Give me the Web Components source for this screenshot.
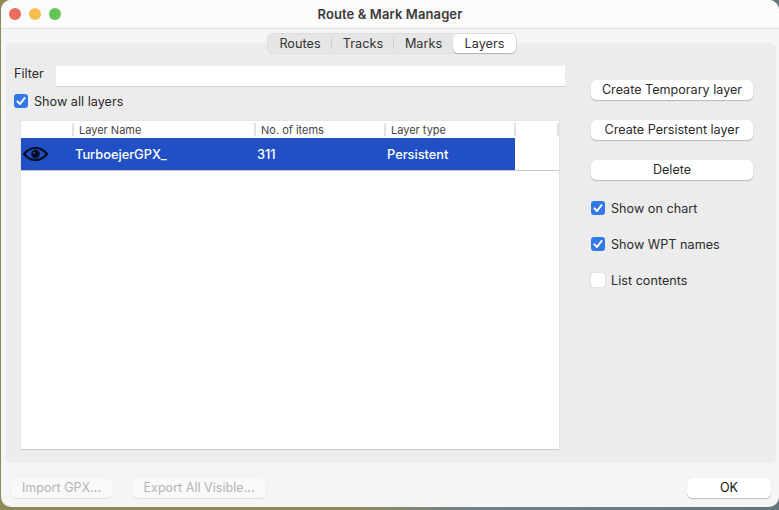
<!DOCTYPE html>
<html>
<head>
<meta charset="utf-8">
<title>Route &amp; Mark Manager</title>
<style>
  html, body { margin: 0; height: 100%; }
  body {
    width: 779px;
    height: 510px;
    overflow: hidden;
    background: linear-gradient(90deg, #8f8a58 0, #8f8a58 45%, #71838a 60%, #62757c 100%);
    font: 12.6px Inter, "Liberation Sans", sans-serif;
    color: #2b2b2b;
  }
</style>
</head>
<body>
<rm-window title-text="Route &amp; Mark Manager">
  <rm-tabs></rm-tabs>
  <rm-panel>
    <rm-filter slot="filter"></rm-filter>
    <rm-check slot="filter" checked>Show all layers</rm-check>
    <rm-table slot="table"></rm-table>
    <rm-button slot="side" wide>Create Temporary layer</rm-button>
    <rm-button slot="side" wide>Create Persistent layer</rm-button>
    <rm-button slot="side" wide>Delete</rm-button>
    <rm-check slot="checks" checked>Show on chart</rm-check>
    <rm-check slot="checks" checked>Show WPT names</rm-check>
    <rm-check slot="checks">List contents</rm-check>
  </rm-panel>
  <rm-footer>
    <rm-button disabled style="width:101px">Import GPX...</rm-button>
    <rm-button disabled style="width:134px;margin-left:20px">Export All Visible...</rm-button>
    <rm-button style="width:84px;margin-left:auto;color:#111">OK</rm-button>
  </rm-footer>
</rm-window>

<script>
class RmWindow extends HTMLElement {
  constructor() {
    super();
    this.attachShadow({ mode: 'open' });
    this.shadowRoot.innerHTML = `
      <style>
        :host {
          display: flex;
          flex-direction: column;
          width: 778px;
          height: 507px;
          margin-left: 1px;
          background: #f5f5f5;
          border-radius: 10px;
          overflow: hidden;
        }
        header {
          flex: none;
          height: 28px;
          display: flex;
          align-items: center;
          justify-content: center;
          position: relative;
          background: #fbfbfb;
          border-bottom: 1px solid #e2e2e2;
          font-weight: 600;
          font-size: 13px;
          letter-spacing: .1px;
          color: #3a3a3a;
        }
        .lights { position: absolute; left: 8px; top: 8px; display: flex; gap: 8px; }
        .lights i { width: 12px; height: 12px; border-radius: 50%; display: block; }
      </style>
      <header>
        <div class="lights">
          <i style="background:#ec6a5e"></i>
          <i style="background:#f4bf4f"></i>
          <i style="background:#61c554"></i>
        </div>
        <span id="title"></span>
      </header>
      <slot></slot>
    `;
  }

  connectedCallback() {
    this.shadowRoot.getElementById('title').textContent = this.getAttribute('title-text');
  }
}

class RmTabs extends HTMLElement {
  constructor() {
    super();
    this.attachShadow({ mode: 'open' });
    this.shadowRoot.innerHTML = `
      <style>
        :host {
          display: flex;
          align-self: center;
          position: relative;
          z-index: 1;
          margin: 4px 0 -11px 4px;
          height: 21px;
          box-sizing: border-box;
          background: #e6e6e6;
          border: 1px solid #dcdcdc;
          border-radius: 6px;
          color: #333;
          font-size: 12.7px;
        }
        span {
          display: flex;
          align-items: center;
          justify-content: center;
          height: 19px;
          position: relative;
        }
        span.sep::after {
          content: "";
          position: absolute;
          right: 0;
          top: 4px;
          height: 11px;
          width: 1px;
          background: #cfcfcf;
        }
        span.on {
          background: #fff;
          border-radius: 5px;
          box-shadow: 0 1px 1px rgba(0,0,0,.2);
        }
      </style>
      <span class="sep" style="width:64px">Routes</span>
      <span class="sep" style="width:62px">Tracks</span>
      <span style="width:59px">Marks</span>
      <span class="on" style="width:63px">Layers</span>
    `;
  }
}

class RmPanel extends HTMLElement {
  constructor() {
    super();
    this.attachShadow({ mode: 'open' });
    this.shadowRoot.innerHTML = `
      <style>
        :host {
          display: grid;
          grid-template-columns: 1fr 210px;
          height: 420px;
          margin: 0 3px 0 5px;
          box-sizing: border-box;
          padding-top: 23px;
          background: #ececec;
          border-radius: 5px;
        }
        .left { display: flex; flex-direction: column; padding-left: 8px; min-width: 0; }
        .filters { display: flex; flex-direction: column; gap: 7px; padding-right: 1px; }
        .table { display: block; margin: 12px 6px 0 6px; }
        .right { display: flex; flex-direction: column; padding: 14px 0 0 25px; }
        .btns { display: flex; flex-direction: column; gap: 20px; }
        .checks { display: flex; flex-direction: column; gap: 22px; margin-top: 21px; }
      </style>
      <div class="left">
        <div class="filters"><slot name="filter"></slot></div>
        <div class="table"><slot name="table"></slot></div>
      </div>
      <div class="right">
        <div class="btns"><slot name="side"></slot></div>
        <div class="checks"><slot name="checks"></slot></div>
      </div>
    `;
  }
}

class RmFilter extends HTMLElement {
  constructor() {
    super();
    this.attachShadow({ mode: 'open' });
    this.shadowRoot.innerHTML = `
      <style>
        :host { display: flex; align-items: center; height: 21px; gap: 13px; }
        input {
          flex: 1;
          min-width: 0;
          height: 21px;
          box-sizing: border-box;
          margin: 0;
          background: #fff;
          border: 0;
          border-bottom: 1px solid #cfcfcf;
          outline: 0;
        }
        label { width: 29px; padding-bottom: 6px; }
      </style>
      <label>Filter</label><input type="text">
    `;
  }
}

class RmCheck extends HTMLElement {
  constructor() {
    super();
    this.attachShadow({ mode: 'open' });
    this.shadowRoot.innerHTML = `
      <style>
        :host { display: flex; align-items: center; gap: 6px; height: 14px; letter-spacing: .03px; }
        .box {
          flex: none;
          width: 14px;
          height: 14px;
          box-sizing: border-box;
          border-radius: 3px;
          background: #fff;
          box-shadow: 0 0 1px rgba(0,0,0,.35);
          display: flex;
        }
        :host([checked]) .box { background: #3478e8; box-shadow: none; }
        svg { display: none; }
        :host([checked]) svg { display: block; }
      </style>
      <span class="box">
        <svg width="14" height="14" viewBox="0 0 14 14"><path d="M3.4 7.4 6 10l4.6-6" fill="none" stroke="#fff" stroke-width="2" stroke-linecap="round" stroke-linejoin="round"/></svg>
      </span>
      <span><slot></slot></span>
    `;
  }
}

class RmButton extends HTMLElement {
  constructor() {
    super();
    this.attachShadow({ mode: 'open' });
    this.shadowRoot.innerHTML = `
      <style>
        :host {
          display: flex;
          align-items: center;
          justify-content: center;
          height: 20px;
          box-sizing: border-box;
          padding-bottom: 1px;
          background: #fff;
          border-radius: 5px;
          box-shadow: 0 1px 1px rgba(0,0,0,.22), 0 0 1px rgba(0,0,0,.12);
          white-space: nowrap;
        }
        :host([wide]) { width: 162px; }
        :host([disabled]) {
          background: #f9f9f9;
          color: #b4b4b4;
          box-shadow: 0 1px 1px rgba(0,0,0,.08), 0 0 1px rgba(0,0,0,.08);
        }
      </style>
      <slot></slot>
    `;
  }
}

class RmTable extends HTMLElement {
  constructor() {
    super();
    this.attachShadow({ mode: 'open' });
    this.shadowRoot.innerHTML = `
      <style>
        :host {
          display: block;
          height: 330px;
          background: #fff;
          border-top: 1px solid #e6e6e6;
          border-bottom: 1px solid #c9c9c9;
          border-right: 1px solid #e2e2e2;
          border-left: 1px solid #e2e2e2;
          box-sizing: border-box;
        }
        .cols { display: grid; grid-template-columns: 51px 182px 130px 130px 43px 1fr; }
        .head { height: 17px; font-size: 11px; color: #444; align-items: center; }
        .head span {
          height: 13px;
          line-height: 15px;
          padding-left: 5px;
          border-left: 2px solid #e2e2e2;
        }
        .head span:first-child { border-left: 0; }
        .row {
          height: 32px;
          border-bottom: 1px solid #c9c9c9;
          grid-template-columns: 494px 1fr;
        }
        .sel {
          background: #2050c4;
          color: #fff;
          font-size: 12.8px;
          font-weight: 500;
          display: grid;
          grid-template-columns: 54px 182px 130px 128px;
          align-items: center;
          padding-top: 1px;
          box-sizing: border-box;
        }
        .eye { display: flex; padding-left: 2px; margin-top: -1px; }
      </style>
      <div class="cols head">
        <span></span><span>Layer Name</span><span>No. of items</span><span>Layer type</span><span></span><span></span>
      </div>
      <div class="cols row">
        <div class="sel">
          <div class="eye">
            <svg width="25" height="14" viewBox="0 0 25 14">
              <path d="M1 7C4.500 2.800 8.200 1 12.500 1S20.500 2.800 24 7c-3.500 4.200-7.200 6-11.500 6S4.500 11.200 1 7Z" fill="none" stroke="#050d24" stroke-width="2.200"/>
              <circle cx="12.500" cy="7" r="4.300" fill="#050d24"/>
              <circle cx="11.200" cy="5.800" r="1" fill="#2050c4"/>
            </svg>
          </div>
          <span>TurboejerGPX_</span><span>311</span><span>Persistent</span>
        </div>
        <div></div>
      </div>
    `;
  }
}

class RmFooter extends HTMLElement {
  constructor() {
    super();
    this.attachShadow({ mode: 'open' });
    this.shadowRoot.innerHTML = `
      <style>
        :host { display: flex; padding: 15px 8px 0 10px; }
      </style>
      <slot></slot>
    `;
  }
}

customElements.define('rm-window', RmWindow);
customElements.define('rm-tabs', RmTabs);
customElements.define('rm-panel', RmPanel);
customElements.define('rm-filter', RmFilter);
customElements.define('rm-check', RmCheck);
customElements.define('rm-button', RmButton);
customElements.define('rm-table', RmTable);
customElements.define('rm-footer', RmFooter);
</script>
</body>
</html>
